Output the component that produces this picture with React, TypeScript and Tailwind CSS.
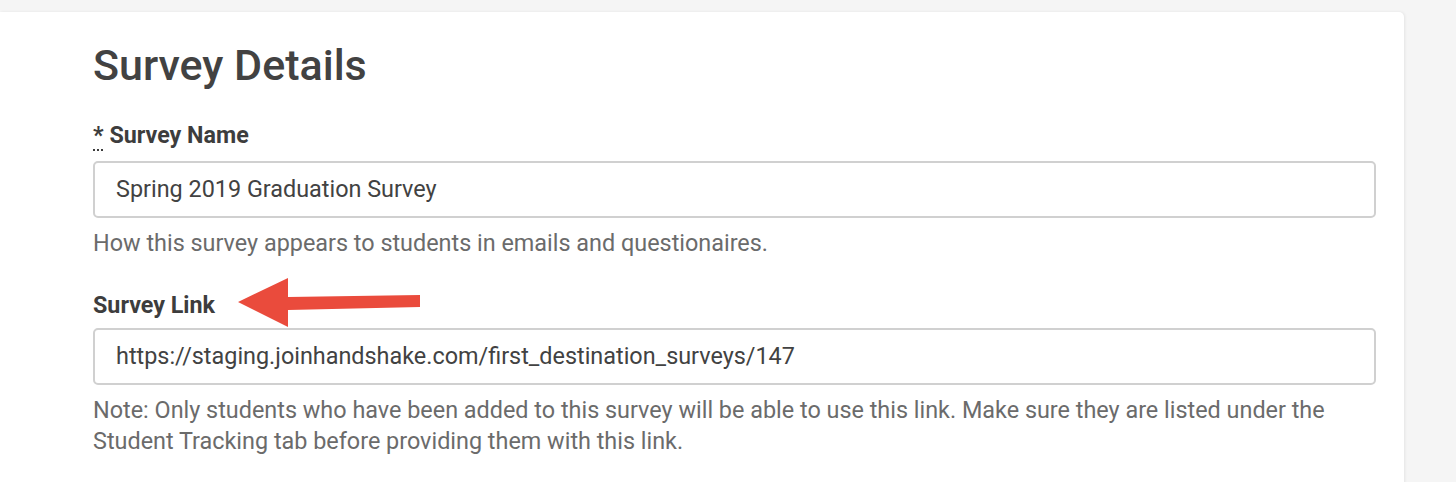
export default function App() {
  return (
    <div className="h-[482px] w-[1456px] overflow-hidden bg-[#f5f5f5] pr-[52px] pt-[12px] font-['Roboto','Liberation_Sans',sans-serif]">
      <div className="h-[600px] rounded-tr-[5px] bg-white pl-[93px] pr-[28px] pt-[26px] shadow-[1px_0_3px_rgba(0,0,0,0.07)]">
        <h1 className="text-[43px] font-medium leading-[54px] text-[#424242]">Survey Details</h1>

        {/* Survey name */}
        <label className="mt-[28px] block text-[23.3px] font-bold leading-[30px] text-[#3d3d3d]">
          <abbr title="required" className="underline decoration-dotted decoration-[2px] underline-offset-[6px]">*</abbr> Survey Name
        </label>
        <div className="mt-[11px] flex h-[57px] items-center rounded-[5px] border-2 border-[#d0d0d0] pl-[21px] text-[23.4px] text-[#424242]">
          Spring 2019 Graduation Survey
        </div>
        <p className="mt-[10px] text-[23.4px] leading-[31px] text-[#6b6b6b]">
          How this survey appears to students in emails and questionaires.
        </p>

        {/* Survey link */}
        <div className="relative mt-[31px]">
          <label className="block text-[23.3px] font-bold leading-[30px] text-[#3d3d3d]">Survey Link</label>
          <svg className="absolute left-[143px] top-[-14px]" width="186" height="54" viewBox="0 0 186 54">
            <polygon points="2,26 52,2 52,21 184,19 184,31 52,34 52,51" fill="#ea4b3c" />
          </svg>
        </div>
        <div className="mt-[8px] flex h-[57px] items-center rounded-[5px] border-2 border-[#d0d0d0] pl-[21px] text-[23.4px] text-[#424242]">
          https://staging.joinhandshake.com/first_destination_surveys/147
        </div>
        <p className="mt-[10px] text-[23.4px] leading-[31px] text-[#6b6b6b]">
          Note: Only students who have been added to this survey will be able to use this link. Make sure they are listed under the Student Tracking tab before providing them with this link.
        </p>
      </div>
    </div>
  );
}
